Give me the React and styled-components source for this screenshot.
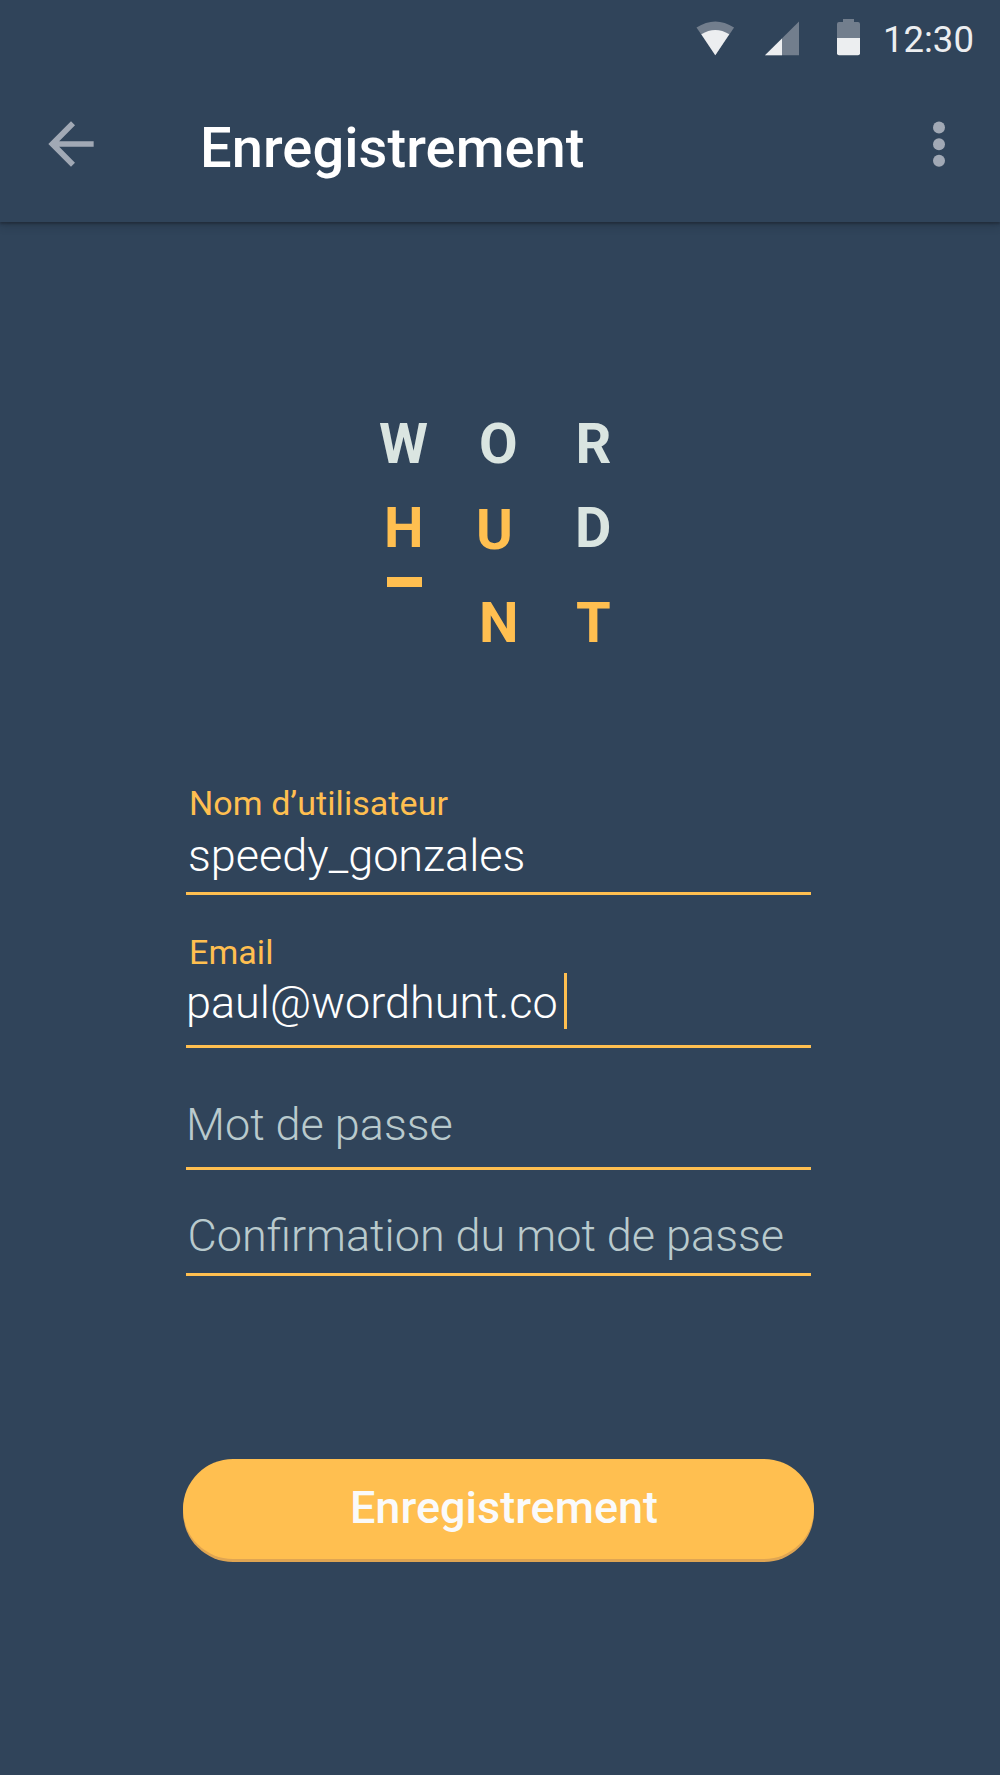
import React from 'react';
import styled, { createGlobalStyle } from 'styled-components';

const amber = '#ffbf50';
const navy = '#30445a';

const GlobalStyle = createGlobalStyle`
  * {
    box-sizing: border-box;
  }
  body {
    margin: 0;
    background: ${navy};
    font-family: Roboto, 'Liberation Sans', sans-serif;
  }
`;

const Screen = styled.div`
  display: flex;
  flex-direction: column;
  width: 1000px;
  height: 1775px;
  overflow: hidden;
  background: ${navy};
`;

const TopArea = styled.header`
  height: 222px;
  box-shadow: 0 2px 2px rgba(25, 33, 43, 0.5), 0 3px 9px rgba(25, 33, 43, 0.32);
`;

const StatusBar = styled.div`
  display: flex;
  align-items: flex-start;
  height: 80px;
  padding: 19px 0 0 696px;
`;

const StatusIcon = styled.svg`
  flex: none;
  display: block;
  margin-right: ${(p) => p.$gap}px;
`;

const Clock = styled.time`
  margin-top: 1px;
  font-size: 36.5px;
  line-height: 40px;
  color: #eceef0;
`;

const AppBar = styled.div`
  display: flex;
  align-items: center;
  height: 142px;
  padding: 0 48px 14px 37px;
`;

const IconButton = styled.button`
  display: flex;
  flex: none;
  padding: 0;
  border: 0;
  background: none;
  color: #a1a9b5;
`;

const Title = styled.h1`
  flex: 1;
  margin: 7px 0 0 95px;
  font-size: 56px;
  font-weight: 500;
  line-height: 64px;
  letter-spacing: 0.08px;
  color: #fff;
`;

const Main = styled.main`
  display: flex;
  flex-direction: column;
  padding: 194px 186px 0;
`;

const Logo = styled.div`
  display: grid;
  grid-template-columns: 100px 97px 60px;
  grid-template-rows: 84px 95px 56px;
  margin-left: 193px;
`;

const Cell = styled.div`
  margin: ${(p) => p.$drop || 0}px 0 0 ${(p) => p.$inset || 0}px;
`;

const Letter = styled.span`
  display: block;
  font-size: 56px;
  font-weight: 700;
  line-height: 56px;
  color: ${(p) => (p.$accent ? amber : '#dae5e1')};
`;

const Dash = styled.span`
  display: block;
  width: 34.5px;
  height: 10px;
  margin: 20.5px 0 0 3px;
  background: ${amber};
`;

const Form = styled.form`
  display: flex;
  flex-direction: column;
  margin-top: 132px;
`;

const Field = styled.label`
  display: block;
  width: 625px;
  margin-top: ${(p) => p.$top || 0}px;
  padding-bottom: ${(p) => p.$bottom}px;
  border-bottom: 3px solid ${amber};
`;

const Caption = styled.span`
  display: block;
  height: 40px;
  padding-left: 3px;
  margin-bottom: ${(p) => p.$gap}px;
  font-size: 34px;
  line-height: 40px;
  letter-spacing: 0.06px;
  color: ${amber};
`;

const Value = styled.span`
  display: flex;
  height: 54px;
  padding-left: ${(p) => p.$inset || 0}px;
  font-size: 45px;
  font-weight: 300;
  line-height: 54px;
  white-space: nowrap;
  color: ${(p) => (p.$placeholder ? '#b9cacd' : '#fff')};
`;

const Caret = styled.span`
  width: 3px;
  height: 56px;
  margin: -3px 0 0 6px;
  background: ${amber};
`;

const Submit = styled.button`
  width: 631px;
  height: 100px;
  margin: 183px 0 0 -3px;
  padding: 0 0 2px 11px;
  border: 0;
  border-radius: 50px;
  background: ${amber};
  box-shadow: 0 3px 0 #dfa552;
  font-family: inherit;
  font-size: 45px;
  font-weight: 500;
  line-height: 54px;
  color: #fafafa;
`;

const letters = [
  { char: 'W' },
  { char: 'O' },
  { char: 'R', inset: -0.5 },
  { char: 'H', inset: 5, accent: true, dash: true },
  { char: 'U', inset: -3, drop: 2, accent: true },
  { char: 'D', inset: -1 },
  { char: '' },
  { char: 'N', accent: true },
  { char: 'T', accent: true },
];

export default function App() {
  return (
    <>
      <GlobalStyle />
      <Screen>
        <TopArea>
          <StatusBar>
            <StatusIcon $gap={30} width="39" height="38" viewBox="696 19 39 38">
              <path fill="#727e8d" d="M696.5 27.6Q715.3 15.4 734.1 27.6L715.3 55.2Z" />
              <path fill="#eceef0" d="M701.3 34.2Q715.3 25.7 729.3 34.2L715.3 55.2Z" />
            </StatusIcon>
            <StatusIcon $gap={37} width="35" height="38" viewBox="765 19 35 38">
              <path fill="#727e8d" d="M765 55.3L799 21.5V55.3Z" />
              <path fill="#eceef0" d="M765 55.3L782 38.4V55.3Z" />
            </StatusIcon>
            <StatusIcon $gap={23} width="23" height="38" viewBox="837 19 23 38">
              <path fill="#727e8d" d="M843 19H854V22H858Q860 22 860 24V38H837V24Q837 22 839 22H843Z" />
              <path fill="#eceef0" d="M837 38H860V53.3Q860 55.3 858 55.3H839Q837 55.3 837 53.3Z" />
            </StatusIcon>
            <Clock>12:30</Clock>
          </StatusBar>
          <AppBar>
            <IconButton aria-label="Retour">
              <svg width="68" height="68" viewBox="0 0 24 24" fill="currentColor">
                <path d="M20 11H7.83l5.59-5.59L12 4l-8 8 8 8 1.41-1.41L7.83 13H20v-2z" />
              </svg>
            </IconButton>
            <Title>Enregistrement</Title>
            <IconButton aria-label="Menu">
              <svg width="26" height="46" viewBox="0 0 26 46" fill="currentColor">
                <circle cx="13" cy="6.5" r="6" />
                <circle cx="13" cy="23.2" r="6" />
                <circle cx="13" cy="39.8" r="6" />
              </svg>
            </IconButton>
          </AppBar>
        </TopArea>
        <Main>
          <Logo>
            {letters.map((l, i) => (
              <Cell key={i} $drop={l.drop} $inset={l.inset}>
                {l.char && <Letter $accent={l.accent}>{l.char}</Letter>}
                {l.dash && <Dash />}
              </Cell>
            ))}
          </Logo>
          <Form onSubmit={(e) => e.preventDefault()}>
            <Field $bottom={9}>
              <Caption $gap={6}>Nom d’utilisateur</Caption>
              <Value $inset={2}>speedy_gonzales</Value>
            </Field>
            <Field $top={37} $bottom={15}>
              <Caption $gap={4}>Email</Caption>
              <Value>
                paul@wordhunt.co
                <Caret />
              </Value>
            </Field>
            <Field $top={50} $bottom={15}>
              <Value $placeholder>Mot de passe</Value>
            </Field>
            <Field $top={39} $bottom={10}>
              <Value $placeholder $inset={1.5}>
                Confirmation du mot de passe
              </Value>
            </Field>
            <Submit type="submit">Enregistrement</Submit>
          </Form>
        </Main>
      </Screen>
    </>
  );
}
